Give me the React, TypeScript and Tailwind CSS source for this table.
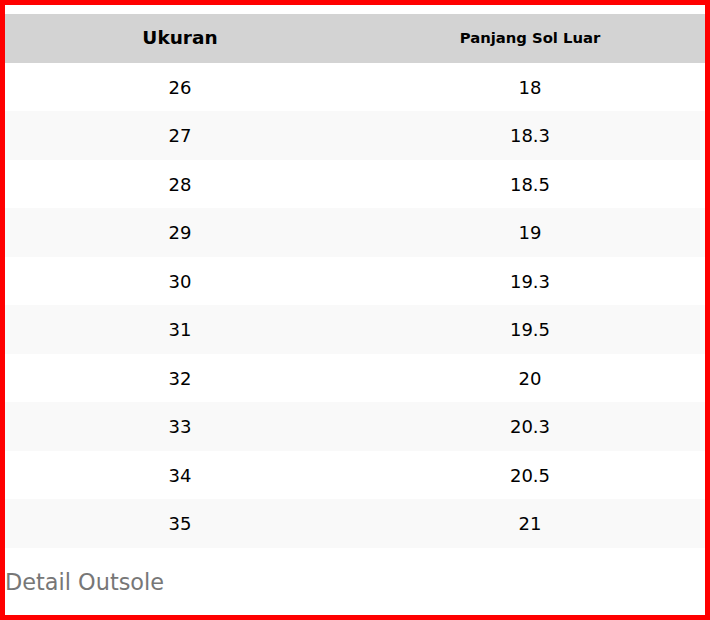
const rows: [string, string][] = [
  ["26", "18"],
  ["27", "18.3"],
  ["28", "18.5"],
  ["29", "19"],
  ["30", "19.3"],
  ["31", "19.5"],
  ["32", "20"],
  ["33", "20.3"],
  ["34", "20.5"],
  ["35", "21"],
];

export default function App() {
  return (
    <div
      className="w-[710px] h-[620px] border-[5px] border-[#ff0000] bg-white pt-[9px]"
      style={{ fontFamily: '"DejaVu Sans", sans-serif' }}
    >
      <div className="w-[700px]">
        <div className="grid grid-cols-2 h-[48.5px] bg-[#d3d3d3] text-black font-bold items-center">
          <div className="text-center text-[18.5px]">Ukuran</div>
          <div className="text-center text-[14.8px]">Panjang Sol Luar</div>
        </div>
        {rows.map(([a, b], i) => (
          <div
            key={a}
            className={
              "grid grid-cols-2 h-[48.5px] items-center text-[18px] text-black pt-[1px] " +
              (i % 2 === 1 ? "bg-[#f9f9f9]" : "bg-white")
            }
          >
            <div className="text-center">{a}</div>
            <div className="text-center">{b}</div>
          </div>
        ))}
      </div>
      <div className="mt-[21px] text-[22.4px] text-[#777777] leading-[1.164]">Detail Outsole</div>
    </div>
  );
}
